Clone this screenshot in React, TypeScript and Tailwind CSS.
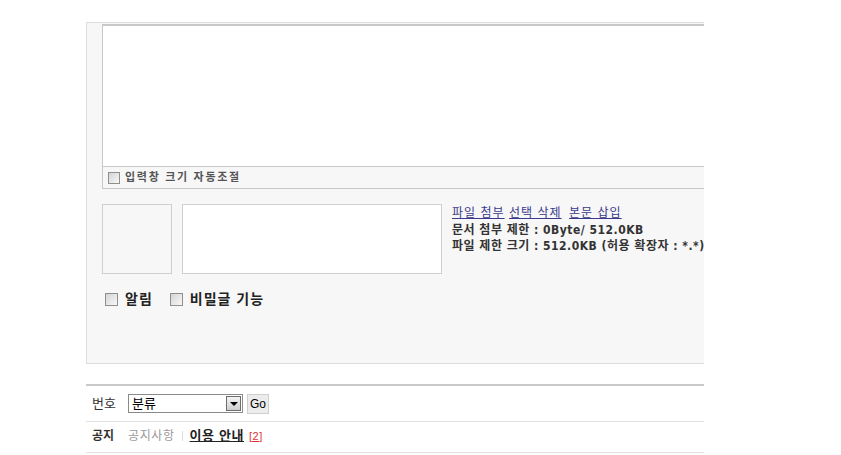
const kr = "font-['Liberation_Sans','Noto_Sans_CJK_KR',sans-serif]";
const tahoma = "font-['DejaVu_Sans_Condensed','Noto_Sans_CJK_KR',sans-serif]";

const Check = ({ size = "w-[13px] h-[13px]" }: { size?: string }) => (
  <span
    className={`${size} inline-block shrink-0 border border-[#8e8f8f] bg-gradient-to-br from-[#d4d4d4] to-[#f8f8f8]`}
  />
);

export default function App() {
  return (
    <div className={`h-[455px] w-[841px] bg-white ${kr}`}>
      <div className="ml-[86px] w-[618px] overflow-hidden pt-[22px]">
        {/* write panel */}
        <div className="h-[342px] w-[640px] border border-[#dcdcdc] bg-[#f7f7f7] pl-[15px] pt-px">
          {/* editor */}
          <div className="w-[640px] border-l border-t-2 border-b border-[#c8c8c8]">
            <div className="h-[140px] bg-white" />
            <div className="flex h-[22px] items-center gap-[5px] border-t border-[#c8c8c8] bg-[#f7f7f7] pl-[5px]">
              <Check size="w-[12px] h-[12px]" />
              <span className="text-[11px] font-bold tracking-[1.7px] text-[#555]">입력창 크기 자동조절</span>
            </div>
          </div>

          {/* file attach */}
          <div className="mt-[15px] flex items-start">
            <div className="h-[70px] w-[70px] border border-[#cfcfcf] bg-[#f7f7f7]" />
            <div className="ml-[10px] h-[70px] w-[260px] border border-[#cfcfcf] bg-white" />
            <div className={`ml-[10px] whitespace-nowrap text-[12px] leading-[16px] ${tahoma}`}>
              <div className="mt-[1px] tracking-[1px] text-[#3a3a8c]">
                <span className="underline">파일 첨부</span> <span className="underline">선택 삭제</span>{" "}
                <span className="ml-[3px] underline">본문 삽입</span>
              </div>
              <div className="mt-[1px] font-bold tracking-[0.5px] text-[#333]">문서 첨부 제한 : 0Byte/ 512.0KB</div>
              <div className="font-bold tracking-[0.5px] text-[#333]">파일 제한 크기 : 512.0KB (허용 확장자 : *.*)</div>
            </div>
          </div>

          {/* options */}
          <div className="mt-[15px] flex items-center pl-[3px]">
            <Check />
            <span className="ml-[7px] text-[14px] font-bold tracking-[1px] text-[#222]">알림</span>
            <span className="ml-[17px]" />
            <Check />
            <span className="ml-[7px] text-[14px] font-bold tracking-[1px] text-[#222]">비밀글 기능</span>
          </div>
        </div>

        {/* list */}
        <div className="mt-[20px] border-t-2 border-[#c9c9c9]">
          <div className="flex h-[36px] items-center border-b border-[#e2e2e2] pl-[6px] text-[13px] text-[#333]">
            <span className="w-[36px]">번호</span>
            <div className="flex h-[19px] w-[115px] items-center justify-between border border-[#8a8a8a] bg-white">
              <span className="pl-[3px] text-[13px] text-black">분류</span>
              <span className="mr-px flex h-[15px] w-[15px] items-center justify-center border border-[#6d6d6d] bg-gradient-to-b from-[#f3f3f3] to-[#cfcfcf]">
                <span className="h-0 w-0 border-x-[4px] border-t-[4px] border-x-transparent border-t-black" />
              </span>
            </div>
            <span className="ml-[4px] flex h-[20px] w-[22px] items-center justify-center border border-[#cfcfcf] bg-[#ececec] text-[12px] text-black">
              Go
            </span>
          </div>
          <div className="-mt-[2px] flex h-[33px] items-center border-b border-[#e2e2e2] pl-[6px] text-[12px]">
            <span className="w-[36px] font-bold text-[#333]">공지</span>
            <span className="tracking-[0.6px] text-[#999]">공지사항</span>
            <span className="mx-[7px] h-[10px] w-px bg-[#ddd]" />
            <span className="text-[13px] font-bold tracking-[0.6px] text-[#222] underline">이용 안내</span>
            <span className="ml-[5px] text-[11px] tracking-[0.5px] text-[#d33] underline">[2]</span>
          </div>
        </div>
      </div>
    </div>
  );
}
